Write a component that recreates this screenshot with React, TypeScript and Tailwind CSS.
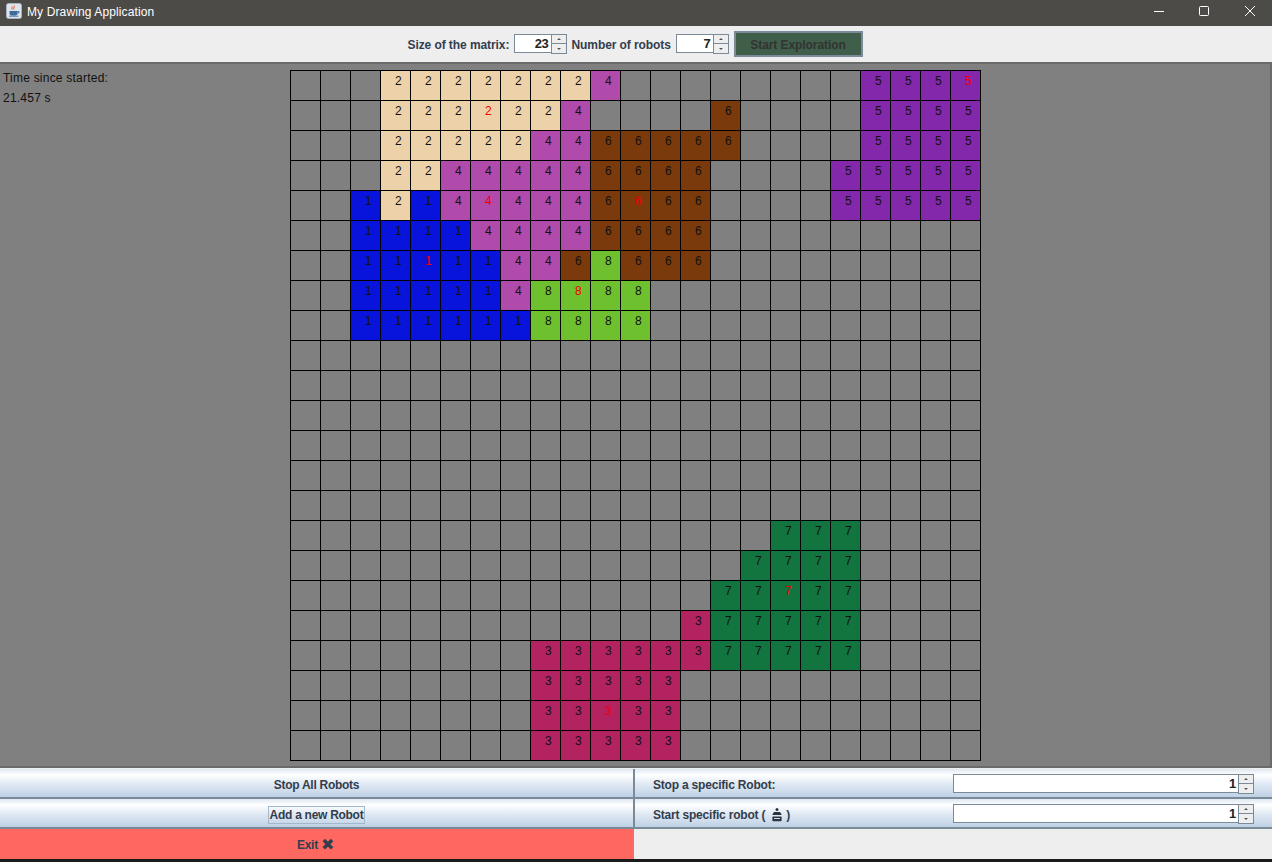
// one string per row of the matrix, '.' = not explored
const rows = [
  '...22222224........5555',
  '...2222224....6....5555',
  '...222224466666....5555',
  '...22444446666....55555',
  '..121444446666....55555',
  '..111144446666.........',
  '..111114468666.........',
  '..1111148888...........',
  '..1111118888...........',
  '.......................',
  '.......................',
  '.......................',
  '.......................',
  '.......................',
  '.......................',
  '................777....',
  '...............7777....',
  '..............77777....',
  '.............377777....',
  '........33333377777....',
  '........33333..........',
  '........33333..........',
  '........33333..........',
]

// robot home cells, drawn with a red number
const redCells = ['0-22', '1-6', '4-6', '4-11', '6-4', '7-9', '17-16', '21-10']

const cellColors: Record<string, string> = {
  '.': 'bg-[#808080]',
  '1': 'bg-[#0814DC]',
  '2': 'bg-[#EDD1A9]',
  '3': 'bg-[#B2235F]',
  '4': 'bg-[#B04AAB]',
  '5': 'bg-[#8327AB]',
  '6': 'bg-[#7A3A0B]',
  '7': 'bg-[#12753F]',
  '8': 'bg-[#6FC02F]',
}

const oceanButton =
  'bg-[linear-gradient(180deg,#dfe8f2_0%,#ffffff_20%,#e4ecf5_45%,#b9cde3_100%)] shadow-[inset_0_-2px_0_#7a8a99]'

function Spinner({ value, inputClass }: { value: number; inputClass: string }) {
  return (
    <div className="flex h-[20px]">
      <div className={`${inputClass} h-[19px] bg-white border-t border-l border-b border-[#7a8a99] text-right pr-[2px] text-[13px] leading-[17px] font-bold tracking-[-0.3px] text-[#222]`}>
        {value}
      </div>
      <div className="w-[16px] flex flex-col border border-[#7a8a99]">
        <div className="h-[9px] bg-[#eeeeee] border-b border-[#7a8a99] flex items-center justify-center">
          <div className="w-0 h-0 border-x-[2px] border-x-transparent border-b-[2px] border-b-[#555]" />
        </div>
        <div className="flex-1 bg-[#eeeeee] flex items-center justify-center">
          <div className="w-0 h-0 border-x-[2px] border-x-transparent border-t-[2px] border-t-[#555]" />
        </div>
      </div>
    </div>
  )
}

function JavaIcon() {
  return (
    <svg width="16" height="16" viewBox="0 0 16 16" className="shrink-0">
      <rect x="0.5" y="0.5" width="15" height="15" rx="2" fill="#dfe3ea" stroke="#aab2c0" />
      <path d="M8 2.5c1.5 1.5-1.5 2.5 0 4M6 3.5c1 1-1 2 0 3" stroke="#d8562a" strokeWidth="1" fill="none" />
      <path d="M3.5 8h8v2.5c0 1.2-1 2-2 2h-4c-1 0-2-.8-2-2z" fill="#3d6c9a" />
      <path d="M11.5 8.5h1.5v1.5h-1.5M3 13.2h9.5" stroke="#3d6c9a" strokeWidth="0.9" fill="none" />
    </svg>
  )
}

function RobotIcon() {
  return (
    <svg width="12" height="14" viewBox="0 0 12 14" className="ml-[6px] mr-[3px]">
      <circle cx="6" cy="1.6" r="1.5" fill="#2d3340" />
      <path d="M3 4h6l1.4 2v2H1.6V6z" fill="#2d3340" />
      <rect x="0.5" y="7" width="11" height="1.1" fill="#dfe8f2" />
      <rect x="1.4" y="8.4" width="9.2" height="4.8" rx="0.8" fill="#2d3340" />
      <rect x="3" y="10" width="6" height="1" fill="#c8d6e6" />
    </svg>
  )
}

export default function App() {
  return (
    <div className="w-[1272px] h-[862px] flex flex-col overflow-hidden bg-[#eeeeee] font-['Liberation_Sans',Arial,sans-serif]">
      {/* window title bar */}
      <div className="h-[26px] shrink-0 bg-[#4d4b48] flex items-center text-white pb-[5px]">
        <div className="pl-[6px] flex items-center gap-[5px] text-[12px] tracking-[0.12px]">
          <JavaIcon />
          <span className="pt-[2px]">My Drawing Application</span>
        </div>
        <div className="ml-auto flex items-center">
          <svg width="10" height="10" viewBox="0 0 10 10" className="mr-[35px]">
            <path d="M0 5.5h10" stroke="#fff" strokeWidth="1" />
          </svg>
          <svg width="10" height="10" viewBox="0 0 10 10" className="mr-[36px]">
            <rect x="0.5" y="0.5" width="9" height="9" rx="1" fill="none" stroke="#fff" strokeWidth="1" />
          </svg>
          <svg width="10" height="10" viewBox="0 0 10 10" className="mr-[17px]">
            <path d="M0 0l10 10M10 0L0 10" stroke="#fff" strokeWidth="1" />
          </svg>
        </div>
      </div>

      {/* settings */}
      <div className="h-[36px] shrink-0 flex items-center justify-center pr-[2px] text-[12px] font-bold text-[#333d4d] tracking-[-0.08px]">
        <span className="w-[102px] pt-[2px] whitespace-nowrap">Size of the matrix:</span>
        <div className="ml-[4px]">
          <Spinner value={23} inputClass="w-[37px]" />
        </div>
        <span className="ml-[5px] w-[99px] pt-[2px] whitespace-nowrap">Number of robots</span>
        <div className="ml-[5px]">
          <Spinner value={7} inputClass="w-[37px]" />
        </div>
        <button className="ml-[5px] w-[129px] h-[26px] pt-[1px] bg-[#3f5f4a] border-2 border-[#7a8a99] text-[#333] font-bold text-[12px]">
          Start Exploration
        </button>
      </div>

      {/* matrix panel */}
      <div className="h-[706px] shrink-0 flex bg-[#808080] border-t-2 border-b-2 border-r-2 border-[#6a6a6a]">
        <div className="w-[290px] shrink-0 pl-[3px] pt-[4px] text-[12px] leading-[20px] tracking-[0.22px] text-[#111]">
          <div>Time since started:</div>
          <div>21.457 s</div>
        </div>
        <div className="mt-[6px] w-[691px] h-[691px] shrink-0 border-r border-b border-black">
          {rows.map((row, r) => (
            <div key={r} className="flex h-[30px]">
              {row.split('').map((c, i) => (
                <div
                  key={i}
                  className={`w-[30px] h-[30px] border-l border-t border-black text-[12px] leading-[14px] pt-[3px] pl-[14px] ${cellColors[c]} ${
                    redCells.includes(`${r}-${i}`) ? 'text-[#f00000]' : 'text-[#111]'
                  }`}
                >
                  {c === '.' ? '' : c}
                </div>
              ))}
            </div>
          ))}
        </div>
      </div>

      {/* robot controls */}
      <div className="flex-1 grid grid-cols-[635px_1fr] grid-rows-[30px_30px_30px] text-[12px] font-bold text-[#333d4d] pt-[1px]">
        <button className={`${oceanButton} pt-[2px] tracking-[-0.28px] border-r-2 border-[#7a8a99] font-bold`}>Stop All Robots</button>
        <div className={`${oceanButton} flex items-center justify-between pl-[18px] pr-[18px] tracking-[-0.2px]`}>
          <span className="pt-[2px]">Stop a specific Robot:</span>
          <Spinner value={1} inputClass="w-[285px]" />
        </div>
        <button className={`${oceanButton} pt-[1px] tracking-[-0.28px] border-r-2 border-[#7a8a99] font-bold`}>
          <span className="inline-block h-[18px] leading-[17px] border border-[#a3b8cc] px-[1px]">Add a new Robot</span>
        </button>
        <div className={`${oceanButton} flex items-center justify-between pl-[18px] pr-[18px] tracking-[-0.2px]`}>
          <div className="flex items-center pt-[2px]">
            <span>Start specific robot (</span>
            <RobotIcon />
            <span>)</span>
          </div>
          <Spinner value={1} inputClass="w-[285px]" />
        </div>
        <button className="bg-[#ff6860] font-bold tracking-[-0.28px] flex items-center justify-center gap-[3px] pr-[3px] pt-[2px] mr-px">
          <span>Exit</span>
          <span className="font-['DejaVu_Sans',sans-serif] text-[16px] leading-none">✖</span>
        </button>
        <div className="bg-[#eeeeee]" />
      </div>
      <div className="h-[3px] shrink-0 bg-[#1a1a1a]" />
    </div>
  )
}
